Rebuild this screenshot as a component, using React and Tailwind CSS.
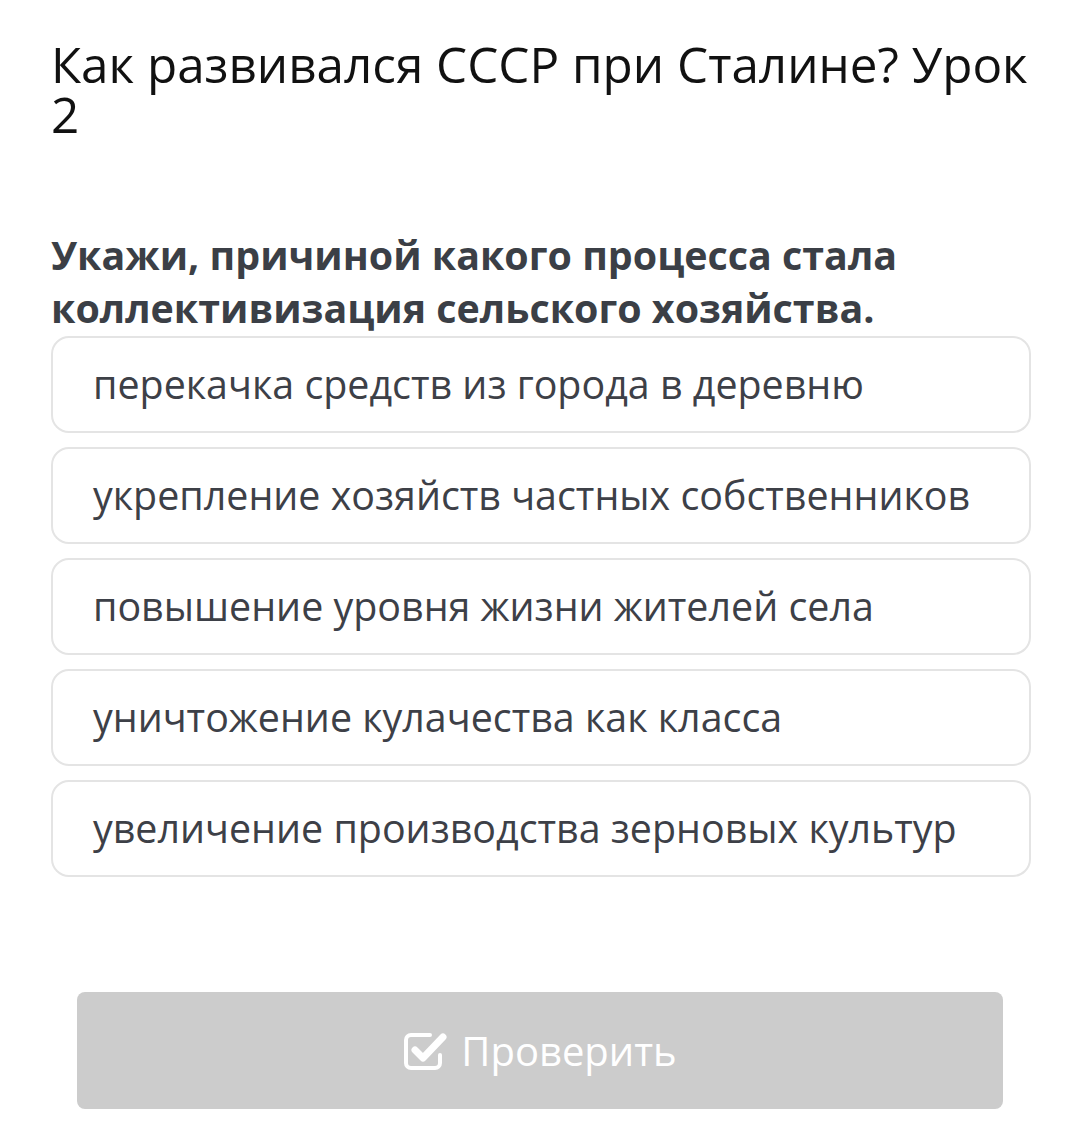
import React from 'react'

const OPTIONS = [
  'перекачка средств из города в деревню',
  'укрепление хозяйств частных собственников',
  'повышение уровня жизни жителей села',
  'уничтожение кулачества как класса',
  'увеличение производства зерновых культур',
]

function CheckSquare() {
  return (
    <svg width="44" height="40" viewBox="0 0 44 40" fill="none">
      <path d="M27 4H8a5 5 0 0 0-5 5v23a5 5 0 0 0 5 5h24a5 5 0 0 0 5-5v-8" stroke="white" strokeWidth="4" strokeLinecap="round" />
      <path d="M12 19l8 8L40 6" stroke="white" strokeWidth="7" strokeLinecap="round" strokeLinejoin="round" />
    </svg>
  )
}

export default function App() {
  return (
    <div className="min-h-[1146px] bg-white font-['Open_Sans',sans-serif]">
      <div className="pl-[51px] pr-[49px] pt-[39px]">
        <h1 className="text-[49.4px] leading-[50px] text-[#111] font-normal">
          Как развивался СССР при Сталине? Урок 2
        </h1>

        <p className="mt-[90px] text-[39.4px] leading-[53px] font-bold text-[#3b3f46]">
          Укажи, причиной какого процесса стала коллективизация сельского хозяйства.
        </p>

        <div className="mt-[1px] flex flex-col gap-[14px]">
          {OPTIONS.map((o) => (
            <div key={o} className="h-[97px] flex items-center pl-[40px] rounded-[18px] border-2 border-[#e4e4e4] text-[39.4px] text-[#3d4047]">
              {o}
            </div>
          ))}
        </div>

        <div className="mt-[115px] ml-[26px] mr-[28px] h-[117px] rounded-[8px] bg-[#cccccc] flex items-center justify-center gap-[14px] text-white text-[40px]">
          <CheckSquare />
          <span>Проверить</span>
        </div>
      </div>
    </div>
  )
}
